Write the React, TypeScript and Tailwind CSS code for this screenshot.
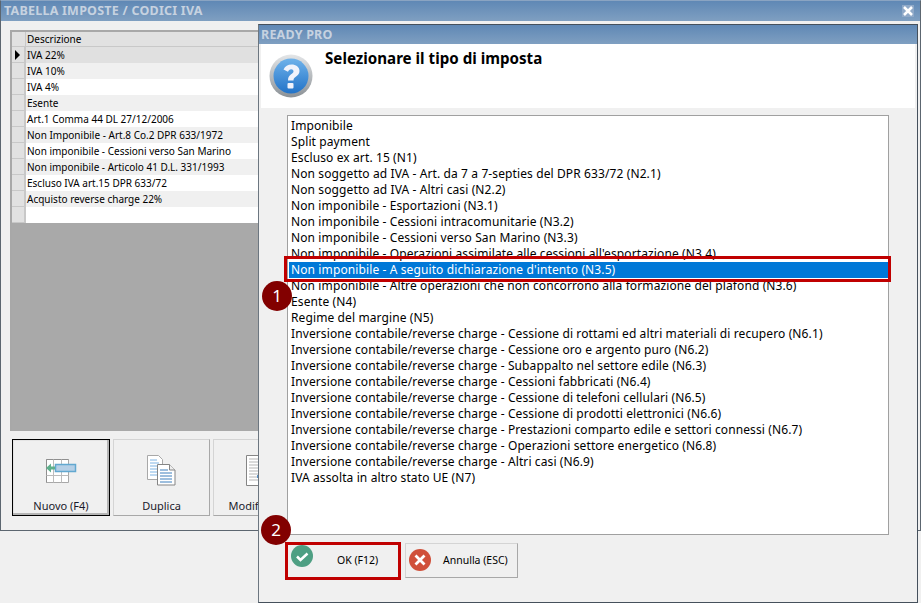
const rows = [
  "IVA 22%",
  "IVA 10%",
  "IVA 4%",
  "Esente",
  "Art.1 Comma 44 DL 27/12/2006",
  "Non Imponibile - Art.8 Co.2 DPR 633/1972",
  "Non imponibile - Cessioni verso San Marino",
  "Non imponibile - Articolo 41 D.L. 331/1993",
  "Escluso IVA art.15 DPR 633/72",
  "Acquisto reverse charge 22%",
  "",
];

const options = [
  "Imponibile",
  "Split payment",
  "Escluso ex art. 15 (N1)",
  "Non soggetto ad IVA - Art. da 7 a 7-septies del DPR 633/72 (N2.1)",
  "Non soggetto ad IVA - Altri casi (N2.2)",
  "Non imponibile - Esportazioni (N3.1)",
  "Non imponibile - Cessioni intracomunitarie (N3.2)",
  "Non imponibile - Cessioni verso San Marino (N3.3)",
  "Non imponibile - Operazioni assimilate alle cessioni all'esportazione (N3.4)",
  "Non imponibile - A seguito dichiarazione d'intento (N3.5)",
  "Non imponibile - Altre operazioni che non concorrono alla formazione del plafond (N3.6)",
  "Esente (N4)",
  "Regime del margine (N5)",
  "Inversione contabile/reverse charge - Cessione di rottami ed altri materiali di recupero (N6.1)",
  "Inversione contabile/reverse charge - Cessione oro e argento puro (N6.2)",
  "Inversione contabile/reverse charge - Subappalto nel settore edile (N6.3)",
  "Inversione contabile/reverse charge - Cessioni fabbricati (N6.4)",
  "Inversione contabile/reverse charge - Cessione di telefoni cellulari (N6.5)",
  "Inversione contabile/reverse charge - Cessione di prodotti elettronici (N6.6)",
  "Inversione contabile/reverse charge - Prestazioni comparto edile e settori connessi (N6.7)",
  "Inversione contabile/reverse charge - Operazioni settore energetico (N6.8)",
  "Inversione contabile/reverse charge - Altri casi (N6.9)",
  "IVA assolta in altro stato UE (N7)",
];

function NewIcon() {
  return (
    <svg width="31" height="26" viewBox="0 0 31 26">
      <path d="M.5 1.5h22v23H.5z" fill="#fff" stroke="#a8a8a8" />
      <path d="M.5 1.500h22M.5 1.500v23" stroke="#8f8f8f" fill="none" />
      <path d="M.5 17.500h22M7.500 1.500v23M15.500 1.500v23" stroke="#bcbcbc" fill="none" />
      <rect x="9.500" y="6.500" width="20" height="7" fill="#b5cfe6" stroke="#62a8d0" strokeWidth="1.500" />
      <path d="M0 10l5-4.500V8.500h4v3H5v3z" fill="#5fb08c" />
    </svg>
  );
}

function CopyIcon() {
  return (
    <svg width="29" height="31" viewBox="0 0 29 31">
      <path d="M.5.500h11l4 4v20H.5z" fill="#fff" stroke="#a8a8a8" />
      <path d="M3 5h7M3 8h9M3 11h9M3 14h9M3 17h9M3 20h7" stroke="#7eb4e4" />
      <path d="M10.500 9.500h12l5.500 5.500v15H10.500z" fill="#fff" stroke="#858585" />
      <path d="M22.500 9.500v5.500H28" fill="#eee" stroke="#858585" />
      <path d="M13 15h8M13 18h12M13 21h12M13 24h12M13 27h12" stroke="#3d7ebd" />
    </svg>
  );
}

function EditIcon() {
  return (
    <svg width="32" height="31" viewBox="0 0 32 31">
      <path d="M.5.500h24v30H.5z" fill="#fff" stroke="#858585" />
      <path d="M3 4h19M3 7h19M3 10h19M3 13h19M3 16h19M3 19h19M3 22h19M3 25h19" stroke="#b5b5b5" />
      <rect x="11" y="20" width="3" height="3" fill="#5b93c9" />
    </svg>
  );
}

function QuestionIcon() {
  return (
    <svg width="44" height="44" viewBox="0 0 44 44">
      <defs>
        <linearGradient id="ring" x1="0" y1="0" x2="0" y2="1">
          <stop offset="0" stopColor="#e4e6e8" />
          <stop offset="1" stopColor="#8b9196" />
        </linearGradient>
        <linearGradient id="ball" x1="0" y1="0" x2="0" y2="1">
          <stop offset="0" stopColor="#6fb2ea" />
          <stop offset="1" stopColor="#2273c8" />
        </linearGradient>
      </defs>
      <circle cx="22" cy="22" r="21.5" fill="url(#ring)" />
      <circle cx="22" cy="22" r="17.5" fill="url(#ball)" />
      <path
        d="M14.5 15.5c1.5-3.5 4.5-5 8-5 4.500 0 8 2.500 8 6.500 0 3-1.800 4.500-4 6-1.500 1-2 1.800-2 3.500h-5.500c0-3 .8-4.500 2.800-6 1.500-1.100 2.700-2 2.700-3.300 0-1.300-1-2-2.300-2-1.500 0-2.600.9-3.200 2.600z"
        fill="#f1f3fb"
      />
      <rect x="18.500" y="29" width="6" height="5.500" rx="1" fill="#f1f3fb" />
    </svg>
  );
}

function Badge({ n }: { n: number }) {
  return (
    <div className="flex h-[30px] w-[30px] items-center justify-center rounded-full bg-[#820000] text-[17px] text-white">
      {n}
    </div>
  );
}

function DeskButton({ label, active, icon }: { label: string; active?: boolean; icon: React.ReactNode }) {
  return (
    <div
      className={
        "flex h-[77px] shrink-0 flex-col items-center bg-[#f0f0f0] " +
        (active
          ? "w-[98px] border border-black shadow-[inset_-2px_-2px_0_#b5b5b5,inset_1px_1px_0_#e4e4e4]"
          : "w-[97px] border border-[#d4d4d4] border-r-[#a8a8a8] border-b-[#a8a8a8]")
      }
    >
      <div className="flex h-[59px] items-center justify-center pt-[2px]">{icon}</div>
      <span className="whitespace-nowrap text-[11px] leading-[14px] text-[#1a1a2a]">{label}</span>
    </div>
  );
}

export default function App() {
  return (
    <div className="relative h-[603px] w-[921px] overflow-hidden bg-[#f0f0f0] font-['Noto_Sans',sans-serif] text-black">
      {/* finestra principale */}
      <div className="h-[531px] w-[921px] border border-[#5c6670] border-t-[#8aa4c2] bg-[#f0f0f0]">
        <div className="flex h-[20px] items-center justify-between bg-gradient-to-b from-[#5f88b5] to-[#7f9fc1] pl-[3px] pr-[6px]">
          <span className="text-[12.5px] font-bold tracking-[0.23px] text-[#c6d2e0]">TABELLA IMPOSTE / CODICI IVA</span>
          <span className="flex h-[12px] w-[12px] items-center justify-center bg-[#8fa9c8]">
            <svg width="10" height="10" viewBox="0 0 10 10">
              <path d="M1 1l8 8M9 1l-8 8" stroke="#fff" strokeWidth="2.500" />
            </svg>
          </span>
        </div>
        <div className="px-[9px] pt-[9px]">
          <div className="flex h-[401px] flex-col border-2 border-b-0 border-[#a8a8a8] border-r-0 bg-[#a9a9a9]">
            <div className="flex h-[15px] border-b border-[#c8c8c8] bg-[#e1e1e1]">
              <div className="w-[14px] border-r border-[#c8c8c8]" />
              <span className="pl-[1px] text-[10px] leading-[15px]">Descrizione</span>
            </div>
            {rows.map((row, i) => (
              <div key={i} className="flex h-[16px]">
                <div className="flex w-[14px] items-center justify-center border-r-2 border-b border-[#c8c8c8] border-r-[#c8c8c8] bg-[#e1e1e1]">
                  {i === 0 && <div className="ml-[-1px] h-0 w-0 border-y-[5px] border-l-[5px] border-y-transparent border-l-black" />}
                </div>
                <span
                  className={
                    "flex-1 pl-[1px] text-[10px] leading-[16px] " +
                    (i === 0 ? "bg-[#e0e0e0]" : i % 2 === 1 ? "bg-[#f0f0f0]" : "bg-white")
                  }
                >
                  {row}
                </span>
              </div>
            ))}
          </div>
          <div className="mt-[8px] flex gap-[3px] pl-[2px]">
            <DeskButton label="Nuovo (F4)" active icon={<NewIcon />} />
            <DeskButton label="Duplica" icon={<CopyIcon />} />
            <DeskButton label="Modifica (F5)" icon={<EditIcon />} />
          </div>
        </div>
      </div>

      {/* dialogo */}
      <div className="absolute left-[258px] top-[24px] flex h-[579px] w-[660px] flex-col border border-[#45505c] border-l-[#6c7680] bg-[#f0f0f0]">
        <div className="flex h-[19px] shrink-0 items-center bg-gradient-to-b from-[#5f88b5] to-[#7f9fc1] pl-[2px] pt-[2px]">
          <span className="text-[12.5px] font-bold tracking-[0.2px] text-[#c6d2e0]">READY PRO</span>
        </div>
        <div className="ml-[2px] mr-[2px] flex h-[64px] shrink-0 bg-white pl-[8px] pt-[10px]">
          <QuestionIcon />
          <span className="ml-[12px] mt-[-7px] text-[15.15px] font-bold">Selezionare il tipo di imposta</span>
        </div>
        <div className="ml-[28px] mt-[7px] h-[420px] w-[602px] shrink-0 border border-[#a0a0a0] bg-white pl-[1px] pt-[2px]">
          {options.map((o) => (
            <div
              key={o}
              className={
                "h-[16px] whitespace-nowrap pl-[2px] text-[12px] leading-[16px] tracking-[0.11px] " +
                (o.includes("N3.5") ? "bg-[#0078d7] text-white" : "")
              }
            >
              {o}
            </div>
          ))}
        </div>
        <div className="ml-[28px] mt-[8px] flex gap-[6px]">
          <div className="flex h-[35px] w-[112px] items-center border border-[#d4d4d4] border-r-[#a8a8a8] border-b-[#a8a8a8] pl-[3px]">
            <svg width="22" height="22" viewBox="0 0 22 22" className="mt-[-10px]">
              <circle cx="11" cy="11" r="11" fill="#4e9f83" />
              <path d="M6 11.500l3.500 3.500 7-6.500" stroke="#fff" strokeWidth="2.500" fill="none" />
            </svg>
            <span className="ml-[24px] text-[10.5px]">OK (F12)</span>
          </div>
          <div className="flex h-[35px] w-[113px] items-center border border-[#d4d4d4] border-r-[#a8a8a8] border-b-[#a8a8a8] pl-[3px]">
            <svg width="22" height="22" viewBox="0 0 22 22" className="mt-[-2px]">
              <circle cx="11" cy="11" r="11" fill="#d0503a" />
              <path d="M6.500 6.500l9 9M15.500 6.500l-9 9" stroke="#fff" strokeWidth="2.800" />
            </svg>
            <span className="ml-[12px] text-[10.5px]">Annulla (ESC)</span>
          </div>
        </div>
      </div>

      {/* evidenziazioni */}
      <div className="absolute left-[284px] top-[256px] h-[26px] w-[607px] border-[3px] border-[#c00000]" />
      <div className="absolute left-[285px] top-[542px] h-[38px] w-[116px] border-[3px] border-[#c00000]" />
      <div className="absolute left-[262px] top-[281px]"><Badge n={1} /></div>
      <div className="absolute left-[261px] top-[515px]"><Badge n={2} /></div>
    </div>
  );
}
